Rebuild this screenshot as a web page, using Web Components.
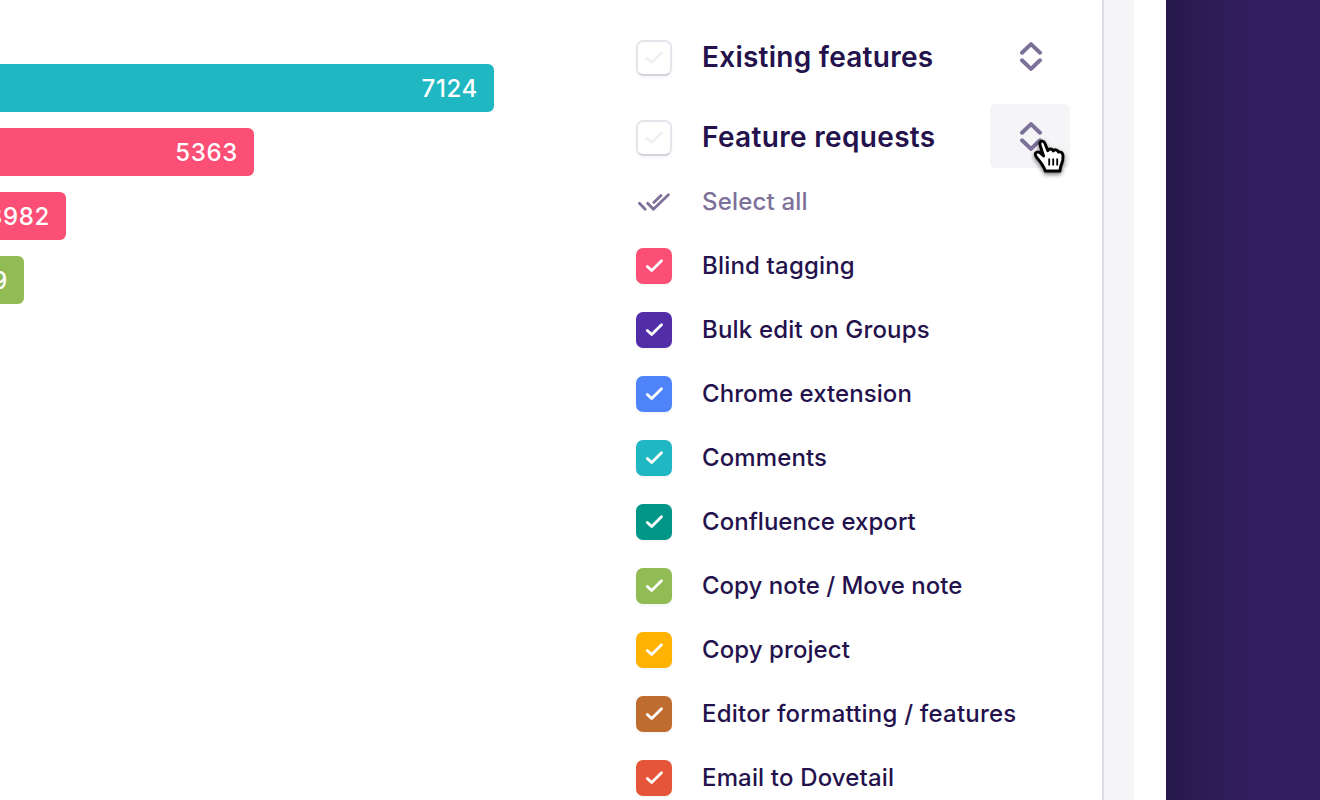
<!DOCTYPE html>
<html lang="en">
<head>
<meta charset="utf-8">
<title>Tag report</title>
<style>
html, body { margin: 0; height: 100%; overflow: hidden; }
body { font-family: Inter, sans-serif; color: #24124d; background: #fff; }
</style>
</head>
<body>
<report-page></report-page>
<script>
const define = (name, html, setup) => {
  const template = document.createElement('template');
  template.innerHTML = html;
  customElements.define(name, class extends HTMLElement {
    connectedCallback() {
      if (this.shadowRoot) return;
      this.attachShadow({ mode: 'open' }).append(template.content.cloneNode(true));
      if (setup) setup(this);
    }
  });
};

define('chart-bar', `
<style>
:host { display: flex; align-items: center; justify-content: flex-end; box-sizing: border-box; height: 48px; width: var(--w); padding: 1px 16px 0 0; background: var(--fill); border-radius: 0 6px 6px 0; color: #fff; font-size: 24px; font-weight: 500; letter-spacing: .65px; line-height: 47px; overflow: hidden; white-space: nowrap; }
</style><slot></slot>`);

define('check-box', `
<style>
:host { display: block; box-sizing: border-box; width: 36px; height: 36px; border-radius: 7px; background: var(--tag, #fff); color: #fff; box-shadow: 0 2px 3px rgba(36,18,77,.04); }
:host([empty]) { border: 2px solid #e5e4ea; border-bottom-color: #d5d3dc; color: #f0eff3; }
svg { display: block; width: 36px; height: 36px; }
:host([empty]) svg { margin: -2px; }
</style>
<svg viewBox="0 0 36 36" fill="none" stroke="currentColor" stroke-width="2.8" stroke-linecap="round" stroke-linejoin="round"><path d="M11.3 18.4 15.7 22.6 25.5 12.7"/></svg>`);

define('tag-row', `
<style>
:host { display: grid; grid-template-columns: 66px 1fr; align-items: center; height: 64px; font-size: 24px; font-weight: 500; letter-spacing: var(--ls, .4px); white-space: nowrap; }
span { padding-bottom: 2px; }
</style><check-box></check-box><span><slot></slot></span>`);

define('sort-toggle', `
<style>
:host { display: flex; align-items: center; justify-content: center; position: relative; width: 80px; height: 64px; border-radius: 6px; color: #7d7099; }
:host([active]) { background: #f5f5f8; }
svg { display: block; margin-left: 2px; }
</style>
<svg width="24" height="30" viewBox="0 0 24 30" fill="none" stroke="currentColor" stroke-width="4" stroke-linecap="round" stroke-linejoin="round"><path d="M3 11.7 12 3.1 21 11.7M3 19.3 12 27.9 21 19.3"/></svg><slot></slot>`);

define('group-row', `
<style>
:host { display: grid; grid-template-columns: 66px 288px 80px; align-items: center; height: 64px; margin-bottom: 16px; font-size: 28px; font-weight: 600; letter-spacing: var(--ls, .3px); white-space: nowrap; }
check-box { margin-top: 4px; }
span { padding-top: 1px; }
</style><check-box empty></check-box><span><slot></slot></span><slot name="action"></slot>`);

define('select-all', `
<style>
:host { display: grid; grid-template-columns: 66px 1fr; align-items: center; height: 64px; color: #7d7099; font-size: 24px; font-weight: 500; letter-spacing: .18px; }
span { padding-bottom: 2px; }
</style>
<svg width="36" height="24" viewBox="0 0 36 24" fill="none" stroke="currentColor" stroke-width="2.8" stroke-linecap="round" stroke-linejoin="round"><path d="M3.4 13.2 9.2 19.2M11.6 13.2 17.4 19.2 32.4 4.8M17.8 12.6 25 5.4"/></svg><span><slot></slot></span>`);

define('hand-cursor', `
<style>:host { display: block; position: absolute; left: 40px; top: 32px; } svg { display: block; overflow: visible; filter: drop-shadow(0 2px 2px rgba(0,0,0,.55)); }</style>
<svg width="38" height="38" viewBox="0 0 38 38"><path d="M15.2 35C14.8 31.9 12.6 29.6 10.6 26.3 9 23.8 5.3 20.7 5.3 18.2 5.4 15.9 8.4 15.2 10.5 17.1L13.6 20 10.4 10.2C9.4 7.2 10 5.4 11.8 5.2 13.7 4.9 14.6 6.4 15.4 8.5L17.8 14.7C18.2 12.7 22.2 12.2 23.3 15 24.5 13.1 27.6 13.5 28.4 16.1 30.6 15.4 32.8 16.8 33 19.6 33.2 23.4 32.6 26 31.4 28.5 30.2 30.8 30.3 32.8 30 35Z" fill="#fff" stroke="#000" stroke-width="2.9" stroke-linejoin="round"/><path d="M19.2 22.5V29.5M23.2 22.5V29.5M27.2 22.5V29.5" stroke="#000" stroke-width="1.8"/></svg>`);

define('report-page', `
<style>
:host { display: grid; grid-template-columns: 636px 466px 32px 32px 154px; width: 1320px; height: 800px; overflow: hidden; }
.chart { display: flex; flex-direction: column; gap: 16px; padding-top: 64px; }
.tags { padding-top: 24px; }
.rail { box-sizing: border-box; border-left: 2px solid #dcdae3; background: #f5f5f8; }
.backdrop { grid-column: 5; background: linear-gradient(90deg, #251849 0, #281a4e 16px, #2b1c55 38px, #301d5b 62px, #321d5e 90px, #321d5e 100%); }
</style>
<div class="chart">
<chart-bar style="--w:494px;--fill:#1fb7c1">7124</chart-bar>
<chart-bar style="--w:254px;--fill:#fb4f76">5363</chart-bar>
<chart-bar style="--w:66px;--fill:#fb4f76">3982</chart-bar>
<chart-bar style="--w:24px;--fill:#91bb55">3669</chart-bar>
</div>
<div class="tags">
<group-row style="--ls:.25px">Existing features<sort-toggle slot="action"></sort-toggle></group-row>
<group-row style="margin-bottom:2px;--ls:.33px">Feature requests<sort-toggle slot="action" active><hand-cursor></hand-cursor></sort-toggle></group-row>
<select-all>Select all</select-all>
<tag-row style="--tag:#fb4f76;--ls:.18px">Blind tagging</tag-row>
<tag-row style="--tag:#512da8;--ls:.18px">Bulk edit on Groups</tag-row>
<tag-row style="--tag:#4f83f9;--ls:.06px">Chrome extension</tag-row>
<tag-row style="--tag:#1fb7c1;--ls:.12px">Comments</tag-row>
<tag-row style="--tag:#009688;--ls:.04px">Confluence export</tag-row>
<tag-row style="--tag:#91bb55;--ls:.01px">Copy note / Move note</tag-row>
<tag-row style="--tag:#ffb300;--ls:.08px">Copy project</tag-row>
<tag-row style="--tag:#bf6c30;--ls:.21px">Editor formatting / features</tag-row>
<tag-row style="--tag:#e55537;--ls:.16px">Email to Dovetail</tag-row>
</div>
<div class="rail"></div>
<div class="backdrop"></div>`);
</script>
</body>
</html>
